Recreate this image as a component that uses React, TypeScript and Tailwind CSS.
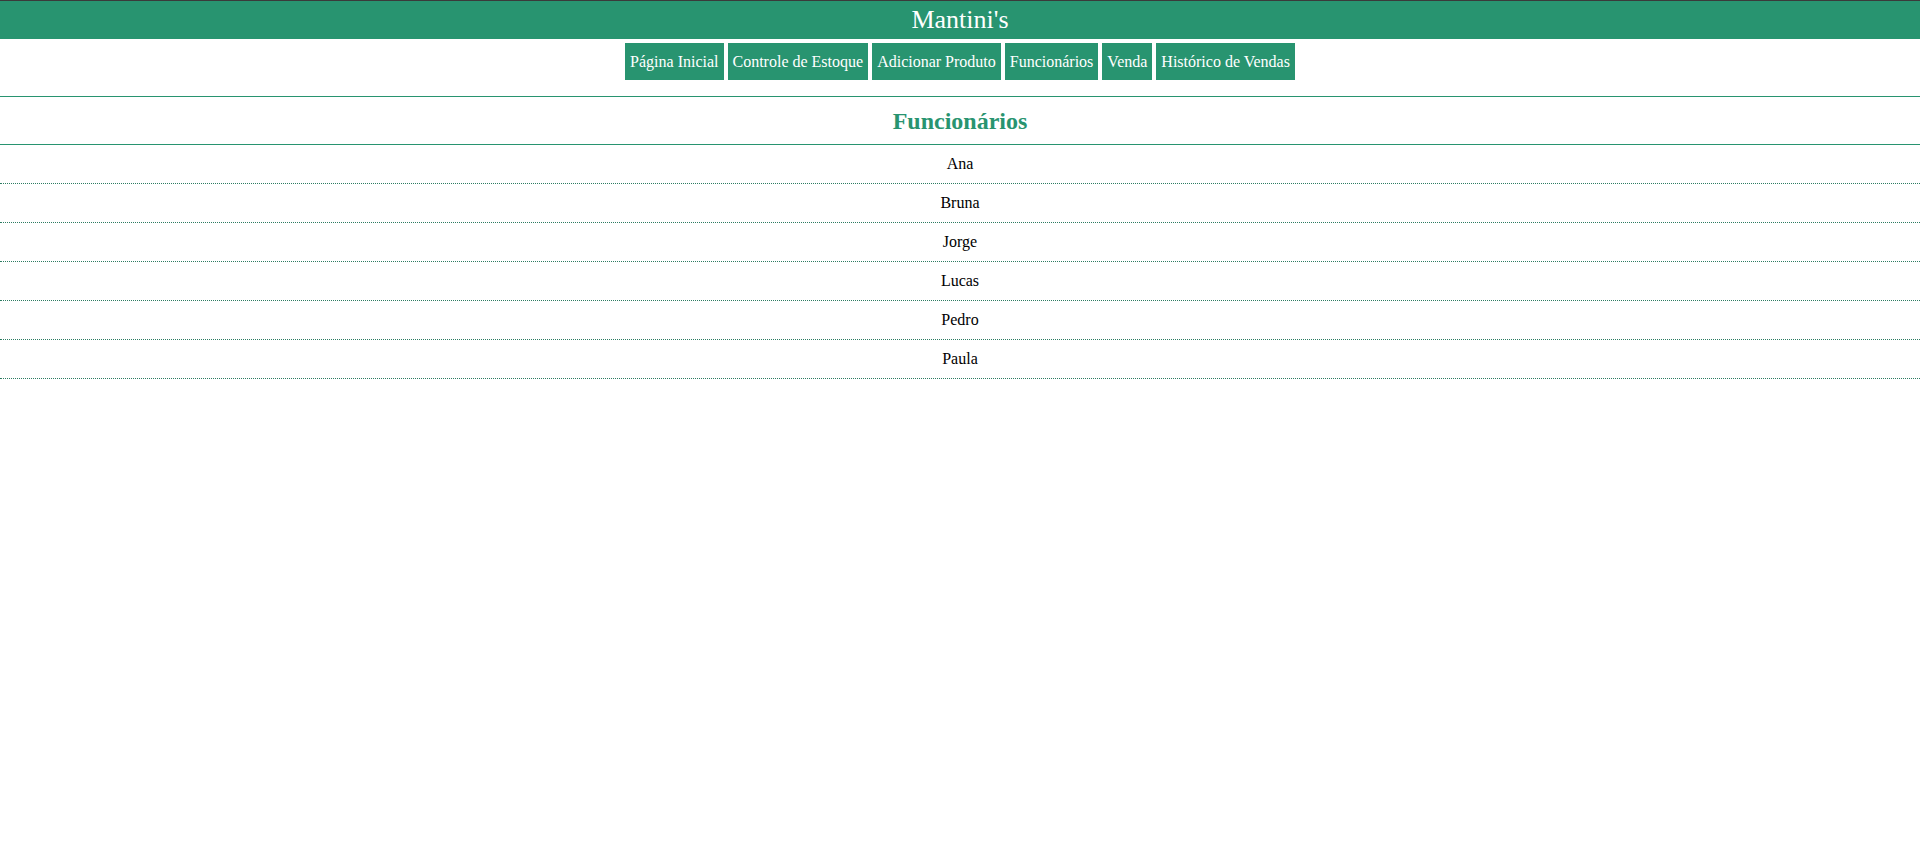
const links = [
  "Página Inicial",
  "Controle de Estoque",
  "Adicionar Produto",
  "Funcionários",
  "Venda",
  "Histórico de Vendas",
];

const funcionarios = ["Ana", "Bruna", "Jorge", "Lucas", "Pedro", "Paula"];

export default function App() {
  return (
    <div
      className="min-h-screen bg-white text-black"
      style={{ fontFamily: '"Liberation Serif", "Times New Roman", serif' }}
    >
      {/* Header */}
      <header className="h-[39px] border-t border-[#3a3a3a] bg-[#289470] flex items-center justify-center">
        <h1 className="text-[26px] leading-none text-white">Mantini's</h1>
      </header>

      {/* Nav */}
      <nav className="flex justify-center gap-1 pt-1 pb-4">
        {links.map((link) => (
          <a
            key={link}
            href="#"
            className="h-[37px] px-[5px] flex items-center bg-[#289470] text-white text-base leading-none"
          >
            {link}
          </a>
        ))}
      </nav>

      {/* Title */}
      <div className="h-[49px] border-y border-[#289470] flex items-center justify-center">
        <h2 className="text-2xl font-bold text-[#289470] leading-none">
          Funcionários
        </h2>
      </div>

      {/* List */}
      <ul>
        {funcionarios.map((nome) => (
          <li
            key={nome}
            className="h-[39px] border-b border-dotted border-[#2d7c62] flex items-center justify-center text-base"
          >
            {nome}
          </li>
        ))}
      </ul>
    </div>
  );
}
